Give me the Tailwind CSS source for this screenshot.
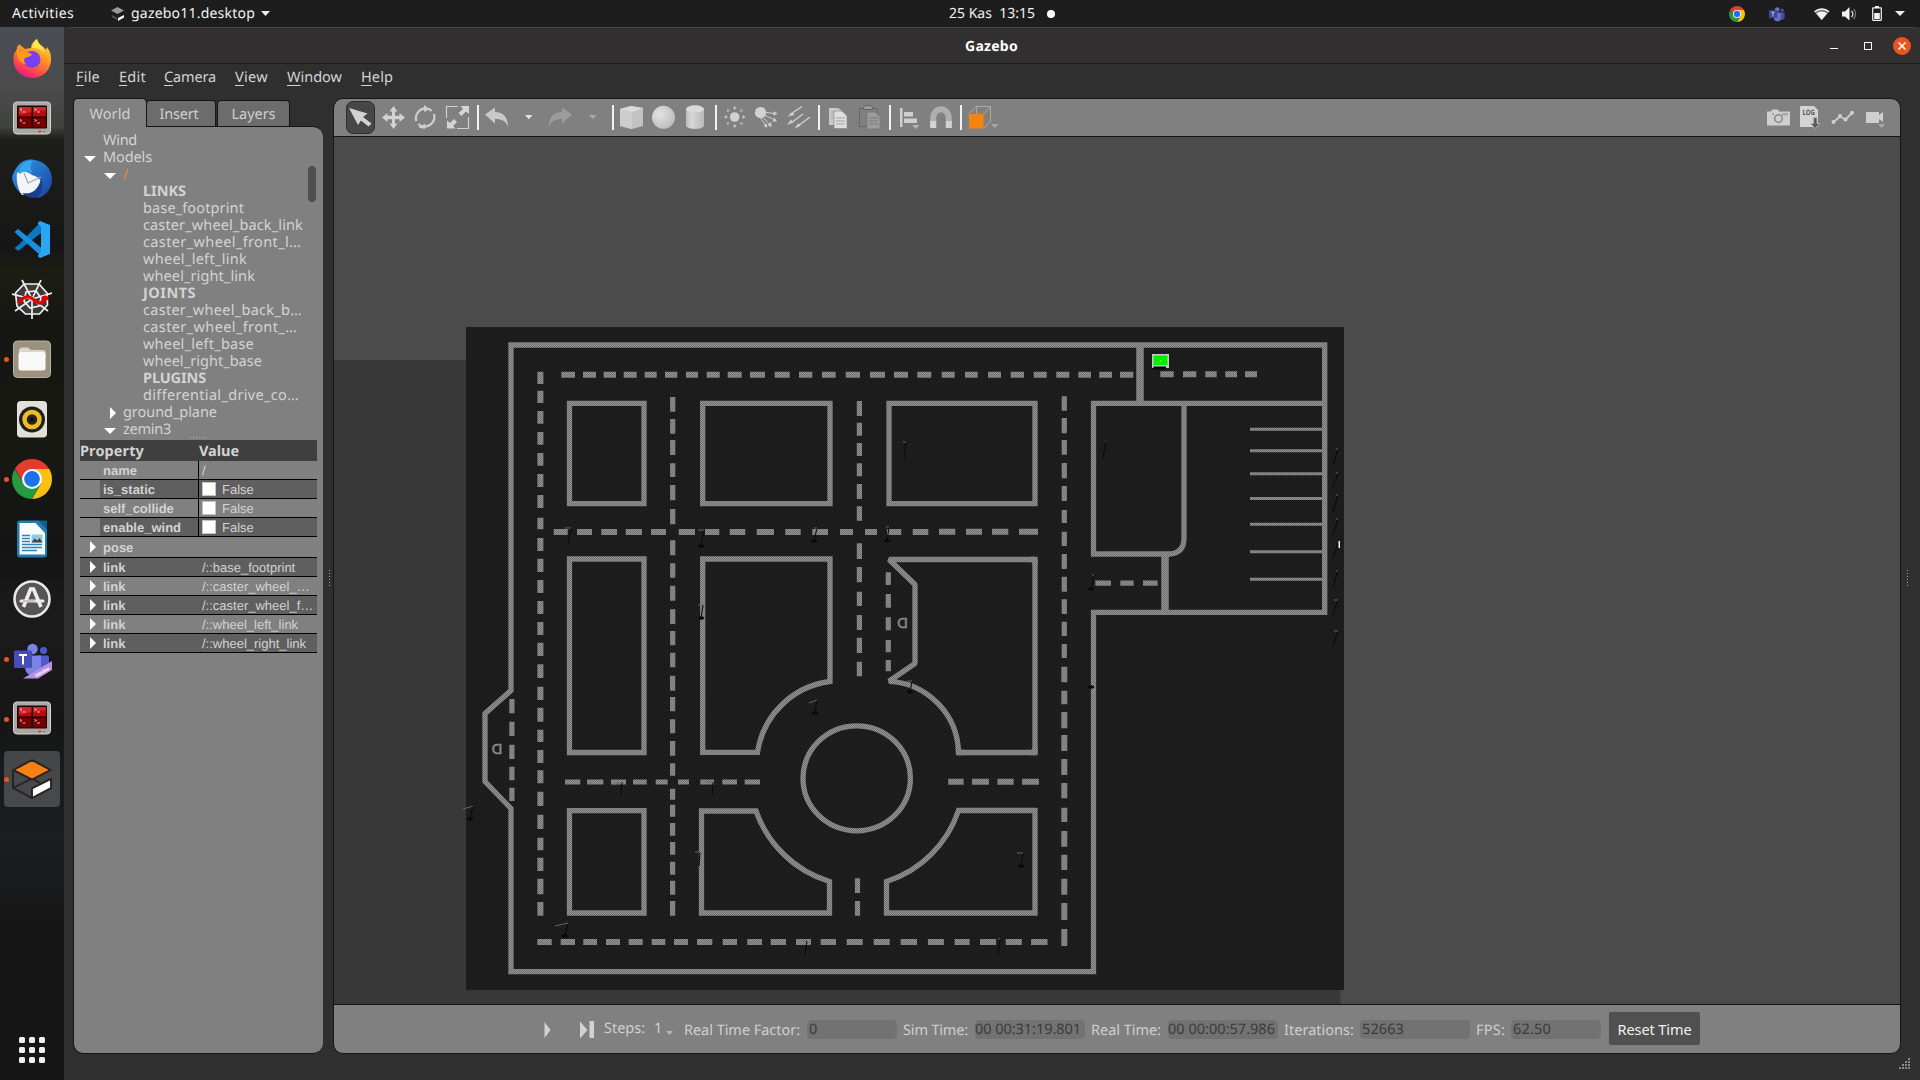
<!DOCTYPE html>
<html lang="en">
<head>
<meta charset="utf-8">
<title>Gazebo</title>
<script src="https://cdn.jsdelivr.net/npm/@tailwindcss/browser@4"></script>
</head>
<body class="w-[1920px] h-[1080px] overflow-hidden bg-[#2f2f2f] flex flex-col font-['Noto_Sans','Open_Sans',sans-serif] text-[14.5px] leading-none text-[#d3d3d3] [text-rendering:geometricPrecision]">

<svg class="absolute w-0 h-0" aria-hidden="true">
  <defs>
    <linearGradient id="tb" x1="0" y1="0" x2="1" y2="1"><stop offset="0" stop-color="#2e9df0"/><stop offset="1" stop-color="#1a3f9c"/></linearGradient>
    <linearGradient id="ff" x1=".8" y1="0" x2=".3" y2="1"><stop offset="0" stop-color="#ffe14a"/><stop offset=".4" stop-color="#ff9a1f"/><stop offset=".75" stop-color="#ff4a4a"/><stop offset="1" stop-color="#e31587"/></linearGradient>
    <radialGradient id="ball" cx=".35" cy=".35" r=".7"><stop offset="0" stop-color="#e2e2e2"/><stop offset="1" stop-color="#bdbdbd"/></radialGradient>
    <linearGradient id="cyl"><stop offset="0" stop-color="#bdbdbd"/><stop offset=".3" stop-color="#d6d6d6"/><stop offset="1" stop-color="#b9b9b9"/></linearGradient>
    <symbol id="chrome" viewBox="0 0 40 40">
      <path d="M3 9.500 11.500 25 20 20V10H37.300A20 20 0 0 0 3 9.500z" fill="#e33b2e"/><path d="M37.300 10A20 20 0 0 1 20 40L28.700 25 20 10z" fill="#fcc011"/><path d="M2.700 10A20 20 0 0 0 20 40L28.700 25 11.500 25z" fill="#249a41"/>
      <circle cx="20" cy="20" r="10" fill="#fff"/><circle cx="20" cy="20" r="7.900" fill="#1a73e8"/>
    </symbol>
    <symbol id="term" viewBox="0 0 40 40">
      <rect x="1.500" y="3" width="37" height="32" rx="3.500" fill="#a9a9a3" stroke="#d6d6d2"/>
      <rect x="5" y="6.500" width="30" height="23" rx="1" fill="#1a0505"/>
      <path d="M6.500 8h13v9.500h-13zM21 8h13v9.500h-13z" fill="#b80a10"/><path d="M6.500 19h13v9.500h-13zM21 19h13v9.500h-13z" fill="#740000"/>
      <path d="M7 8h12.500v5L7 15.500zM21.500 8H34v3l-12.500 2z" fill="#e03a40" opacity=".6"/>
      <path d="M8 9.500l2 1-2 1M10.500 13h3M22.500 9.500l2 1-2 1M25 13h3M8 20.500l2 1-2 1M10.500 24h3M22.500 20.500l2 1-2 1M25 24h3" stroke="#f3c4c4" fill="none" stroke-width=".9"/>
      <path d="M26.500 32.500h2.500" stroke="#e02020" stroke-width="1.500"/><path d="M31 32.500h2" stroke="#777" stroke-width="1"/>
    </symbol>
    <symbol id="teams" viewBox="0 0 40 40">
      <circle cx="20.500" cy="10" r="5.200" fill="#7b83eb"/><circle cx="31.500" cy="11.500" r="3.600" fill="#5059c9"/>
      <path d="M26 16.500h9.500a1.500 1.500 0 0 1 1.500 1.500v9a6 6 0 0 1-10 4.500z" fill="#5059c9"/><path d="M13 16.500h16v12a8 8 0 0 1-16 0z" fill="#7b83eb"/>
      <rect x="2" y="11.500" width="18" height="17.500" rx="1.500" fill="#464eb8"/><path d="M7 16h8M11 16v9.500" stroke="#fff" stroke-width="2" fill="none"/>
    </symbol>
  </defs>
</svg>

<!-- top bar -->
<header class="h-[27px] shrink-0 bg-[#1d1d1d] flex items-center text-[#f2f2f2] text-[14px]">
  <span class="ml-3 w-[99px] whitespace-nowrap" data-w="62">Activities</span>
  <svg class="w-[14px] h-4 mr-[6px]" viewBox="0 0 14 16"><path d="M0 4.500 6.500 1 13 4.500 6.500 8z" fill="#9a9a9a"/><path d="M1 9v2l5 3V12z" fill="#555"/><path d="M7 12l6-3v2.500l-6 3.500z" fill="#fff"/></svg>
  <span class="w-[130px] whitespace-nowrap" data-w="124">gazebo11.desktop</span>
  <svg class="w-[9px] h-[5px]" viewBox="0 0 9 5"><path d="M0 0h9L4.500 5z" fill="#eee"/></svg>
  <span class="ml-[679px] w-[98px] whitespace-pre" data-w="86">25 Kas  13:15</span>
  <i class="w-2 h-2 rounded-full bg-white"></i>
  <div class="ml-auto flex items-center">
    <svg class="w-4 h-4" viewBox="0 0 40 40"><use href="#chrome"/></svg>
    <svg class="w-[18px] h-[18px] ml-[23px]" viewBox="0 0 40 40"><g opacity=".8"><use href="#teams"/></g></svg>
    <svg class="w-4 h-3 ml-[28px]" viewBox="0 0 16 12"><path d="M0 3.500a11.500 11.500 0 0 1 15.500 0L7.700 12z" fill="#777"/><path d="M2.300 5.500a8 8 0 0 1 10.800 0L7.700 12z" fill="#f2f2f2"/><path d="M.6 3.700a11 11 0 0 1 14.400 0" stroke="#f2f2f2" fill="none" stroke-width="1.400"/></svg>
    <svg class="w-[15px] h-[14px] ml-[12px]" viewBox="0 0 15 14"><path d="M0 4.500h3L7.500 0v13.500L3 9.500H0z" fill="#f2f2f2"/><path d="M9.500 4a4 4 0 0 1 0 6" stroke="#ddd" fill="none" stroke-width="1.300"/><path d="M11.500 2a7 7 0 0 1 0 10" stroke="#777" fill="none" stroke-width="1.200"/></svg>
    <svg class="w-[10px] h-[15px] ml-[15px]" viewBox="0 0 10 15"><path d="M3 0h4v2H3z" fill="#f2f2f2"/><rect x=".7" y="1.800" width="8.600" height="12.500" rx=".5" fill="none" stroke="#f2f2f2" stroke-width="1.200"/><path d="M2.200 7h5.600v6H2.200z" fill="#f2f2f2"/></svg>
    <svg class="w-[10px] h-[5px] ml-[13px] mr-[15px]" viewBox="0 0 10 5"><path d="M0 0h10L5 5z" fill="#eee"/></svg>
  </div>
</header>

<div class="flex flex-1 min-h-0">
<!-- dock -->
<nav class="w-16 shrink-0 relative bg-[linear-gradient(#494d54_0px,#4b4b4c_60px,#40423f_100px,#1e1f1b_112px,#161616_220px,#1c1d13_250px,#151513_300px,#181a12_400px,#141414_520px,#1b1b1b_590px,#161616_700px,#1a1f22_810px,#171616_900px,#161515_1053px)] flex flex-col pt-[2px]">
  <div class="h-[60px] flex items-center justify-center"><svg class="w-10 h-10" viewBox="0 0 40 40"><path d="M25 0c-5 3-6 7-6 9l-6 1-6-5c-1 3-3 7-5 10-3 14 6 24 18 24s20-10 19-20c0-5-2-8-4-11l-1 3C32 7 26 6 25 0z" fill="url(#ff)"/><circle cx="20" cy="20.500" r="8.500" fill="#7a3ff0"/><path d="M5 6l3 7c5-2 8 1 12 2-1 3-5 3-7 4-2 2 0 5 1 6-6 0-9-6-9-12z" fill="#ff9a1c"/><path d="M25 0c1 6 7 7 7 14-2-4-7-5-12-5 0-3 2-7 5-9z" fill="#ffe64d"/></svg></div>
  <div class="h-[60px] flex items-center justify-center"><svg class="w-10 h-10" viewBox="0 0 40 40"><use href="#term"/></svg></div>
  <div class="h-[60px] flex items-center justify-center"><svg class="w-10 h-10" viewBox="0 0 40 40"><path d="M5 8C9 2 15 0 20 .500c12 1 20 9 20 20 0 9-6 16-13 18.500L8 34C3 29 1 24 0 19c1-5 3-8 5-11z" fill="url(#tb)"/><path d="M5 14c6-3 11-1 15 2 4 1 7 3 9 6l-3 12-16 2C6 31 4 22 5 14z" fill="#f3f5f8"/><path d="M12 14l4 10 13-6" fill="none" stroke="#9aa6b8" stroke-width="1.200"/><path d="M8 9C12 2 17 1 21 2c-4 3-2 7-1 12-5-2-8-2-12 1-2-1-1-4 0-6z" fill="#3aa4ea"/><path d="M29 20c3 6 1 13-3 18-6 2-12 0-16-4 8 1 15 0 19-14z" fill="#1b3f8e"/></svg></div>
  <div class="h-[60px] flex items-center justify-center"><svg class="w-10 h-10" viewBox="0 0 40 40"><path d="M29 2.500 7.500 25 2.500 29 6 32l23-18z" fill="#0b78c6"/><path d="M2.500 13 6 10l23.500 19v8.500L2.500 13z" fill="#1690df"/><path d="M28 2l10 4v29l-10 4-2.500-2 3.500-4V8l-3.500-4z" fill="#2aa7f2"/></svg></div>
  <div class="h-[60px] flex items-center justify-center"><svg class="w-10 h-10" viewBox="0 0 40 40" fill="none" stroke="#f1f1f1" stroke-width="1.700"><path d="M12 5h15l8 9 .5 12-8 9-14 0L5 27 3.500 14z" fill="#3a3a3a"/><path d="M14 13l10-1 5 7-2 8-9 2-6-7z"/><path d="M20 20 10 1M20 20 29 1M20 20 0 15M20 20l20-6M20 20 3 32M20 20l16 12M20 20v20"/><path d="M6 24c4-5 7-7 11-6s7 6 11 6 3-3 5-5" stroke="#e80000" stroke-width="3.300"/><ellipse cx="33" cy="19" rx="3.500" ry="2.600" fill="#e80000" stroke="none"/></svg></div>
  <div class="h-[60px] flex items-center justify-center relative"><i class="absolute left-1 w-[5px] h-[5px] rounded-full bg-[#e95420]"></i><svg class="w-10 h-10" viewBox="0 0 40 40"><rect x="1.500" y="2" width="37" height="36.500" rx="4" fill="#9a927f" stroke="#b9b3a3"/><path d="M7 13a4 4 0 0 1 3-4.500h6l3 2.500h12a2.500 2.500 0 0 1 2.500 2.500V20H7z" fill="#d9d6cc"/><rect x="6.500" y="13" width="27" height="18.500" rx="2.500" fill="#f8f8f6"/></svg></div>
  <div class="h-[60px] flex items-center justify-center"><svg class="w-10 h-10" viewBox="0 0 40 40"><rect x="5" y="2" width="30" height="36.500" rx="4" fill="#e3e0d7"/><circle cx="20" cy="20.500" r="13" fill="#1f1f22"/><circle cx="20" cy="20.500" r="7.500" fill="none" stroke="#f0bd1f" stroke-width="4.500"/><circle cx="20" cy="20.500" r="4.300" fill="#26262a"/><circle cx="20" cy="20.500" r="2" fill="#050505"/></svg></div>
  <div class="h-[60px] flex items-center justify-center relative"><i class="absolute left-1 w-[5px] h-[5px] rounded-full bg-[#e95420]"></i><svg class="w-10 h-10" viewBox="0 0 40 40"><use href="#chrome"/></svg></div>
  <div class="h-[60px] flex items-center justify-center"><svg class="w-10 h-10" viewBox="0 0 40 40"><path d="M8 1.500h19L35 10v25.500a3 3 0 0 1-3 3H8a3 3 0 0 1-3-3v-31a3 3 0 0 1 3-3z" fill="#1e7db3"/><path d="M7.500 4h16L33 14v21.500H7.500z" fill="#fafafa"/><path d="M26.500 1.500H35V10z" fill="#0c5f8e"/><path d="M10 16.500h8M10 19.500h8M10 22.500h8M10 25.500h20M10 28.500h20M10 31.500h15" stroke="#2e86b8" stroke-width="1.400"/><path d="M19.500 15.500h11v8h-11z" fill="#82cdf0"/><path d="M19.500 23.500l3-4 3 2 2-2.500 3 4.500z" fill="#444"/><circle cx="28.500" cy="17" r="1.200" fill="#f0c020"/></svg></div>
  <div class="h-[60px] flex items-center justify-center"><svg class="w-10 h-10" viewBox="0 0 40 40"><circle cx="20" cy="20" r="17.500" fill="#555" stroke="#e9e9e9" stroke-width="2.600"/><path d="M11.500 28 18.500 10h3L29 28" fill="none" stroke="#eee" stroke-width="3.600"/><path d="M9 22h22" stroke="#eee" stroke-width="3" stroke-linecap="round"/><path d="M11 22h12" stroke="#c8a4c4" stroke-width="1.400"/></svg></div>
  <div class="h-[60px] flex items-center justify-center relative"><i class="absolute left-1 w-[5px] h-[5px] rounded-full bg-[#e95420]"></i><svg class="w-10 h-10" viewBox="0 0 40 40"><use href="#teams"/><path d="M40 22v9L26 39.500H11z" fill="#b78fe0"/><text x="0" y="0" transform="translate(24 38.500) rotate(-30)" font-size="4" font-weight="700" fill="#fff" textLength="16">PREVIEW</text></svg></div>
  <div class="h-[60px] flex items-center justify-center relative"><i class="absolute left-1 w-[5px] h-[5px] rounded-full bg-[#e95420]"></i><svg class="w-10 h-10" viewBox="0 0 40 40"><use href="#term"/></svg></div>
  <div class="h-[60px] flex items-center justify-center relative"><div class="absolute left-1 top-[2px] w-14 h-14 rounded bg-white/20"></div><i class="absolute left-1 w-[5px] h-[5px] rounded-full bg-[#e95420]"></i><svg class="w-10 h-10 relative" viewBox="0 0 40 40" stroke="#262122" stroke-width="1.900" stroke-linejoin="round"><path d="M1 11v18l19 10 19-10V20L20 29.500M1 29l19-9.500 8 4.500M1 11l19 9.500" fill="none"/><path d="M1.500 11 20 1l18.500 10L20 20.500z" fill="#f58113"/><path d="M20 39V29.500L39 20v9z" fill="#fff"/></svg></div>
  <div class="mt-auto mb-[17px] ml-[19px] grid grid-cols-3 w-[26px] gap-x-1 gap-y-1">
    <i class="w-[6px] h-[6px] rounded-[1.500px] bg-[#f0f0ee]"></i><i class="w-[6px] h-[6px] rounded-[1.500px] bg-[#f0f0ee]"></i><i class="w-[6px] h-[6px] rounded-[1.500px] bg-[#f0f0ee]"></i>
    <i class="w-[6px] h-[6px] rounded-[1.500px] bg-[#f0f0ee]"></i><i class="w-[6px] h-[6px] rounded-[1.500px] bg-[#f0f0ee]"></i><i class="w-[6px] h-[6px] rounded-[1.500px] bg-[#f0f0ee]"></i>
    <i class="w-[6px] h-[6px] rounded-[1.500px] bg-[#f0f0ee]"></i><i class="w-[6px] h-[6px] rounded-[1.500px] bg-[#f0f0ee]"></i><i class="w-[6px] h-[6px] rounded-[1.500px] bg-[#f0f0ee]"></i>
  </div>
</nav>

<!-- window -->
<main class="flex-1 min-w-0 flex flex-col relative">
  <div class="h-[37px] shrink-0 bg-[#322f30] border-t border-[#484647] border-b border-b-[#1f1d1e] rounded-t-[7px] flex items-center justify-end relative">
    <span class="absolute left-[901px] top-[12px] font-bold text-white text-[14px]" data-w="53">Gazebo</span>
    <i class="w-2 h-px bg-white mt-[5px] mr-[26px]"></i>
    <i class="w-2 h-2 border border-white mr-[21px]"></i>
    <svg class="w-[18px] h-[18px] mr-[9px]" viewBox="0 0 18 18"><circle cx="9" cy="9" r="9" fill="#e95420"/><path d="M5.500 5.500l7 7M12.500 5.500l-7 7" stroke="#fff" stroke-width="1.500"/></svg>
  </div>
  <div class="h-[34px] shrink-0 flex pt-[6px] pl-[12px] [&>span]:h-[15px] [&>span]:whitespace-nowrap [&_u]:underline-offset-[3px]">
    <span class="w-[43px]" data-w="24"><u>F</u>ile</span><span class="w-[45px]" data-w="27"><u>E</u>dit</span><span class="w-[71px]" data-w="52"><u>C</u>amera</span><span class="w-[52px]" data-w="33"><u>V</u>iew</span><span class="w-[74px]" data-w="55"><u>W</u>indow</span><span data-w="32"><u>H</u>elp</span>
  </div>

  <div class="flex flex-1 min-h-0 pb-[26px] pl-[9px]">
    <!-- left panel -->
    <aside class="w-[250px] shrink-0 flex flex-col relative">
      <div class="flex items-end h-[28px] text-center text-[#cfcfcf] relative z-10">
        <div class="w-[74px] h-[29px] -mb-px bg-[#808080] border border-b-0 border-[#151515] rounded-t-[5px] pt-[8px]"><span data-w="41">World</span></div>
        <div class="w-[70px] -ml-px h-[26px] bg-[#6c6c6c] border border-b-0 border-[#151515] rounded-t-[4px] pt-[6px] pr-1"><span data-w="39">Insert</span></div>
        <div class="w-[73px] h-[26px] ml-px bg-[#6c6c6c] border border-b-0 border-[#151515] rounded-t-[4px] pt-[6px]"><span data-w="44">Layers</span></div>
      </div>
      <div class="flex-1 min-h-0 bg-[#808080] border border-r-0 border-[#151515] rounded-[10px] rounded-tl-none relative flex flex-col">
        <div class="absolute right-[7px] top-[39px] w-2 h-[36px] rounded-full bg-[#4f4f4f]"></div>
        <div id="tree" class="h-[311px] pt-[5px] overflow-hidden relative"></div>
        <i class="h-[3px] w-[18px] mx-auto relative -left-[1px] -top-[2px] -mb-[3px] bg-[radial-gradient(circle,#b5b5b5_1px,transparent_1px)] bg-[length:3px_3px]"></i>
        <div class="ml-[6px] mt-[2px] w-[237px]">
          <div class="h-[21px] pt-[2px] bg-[#3f3f3f] font-bold flex items-center"><span class="w-[119px]" data-w="64">Property</span><span data-w="40">Value</span></div>
          <div id="props" class="font-['Liberation_Sans',Arial,sans-serif] text-[13px]"></div>
        </div>
      </div>
    </aside>
    <div class="w-[10px] shrink-0 flex items-center justify-center"><i class="w-[3px] h-[18px] ml-[2px] mt-[3px] bg-[radial-gradient(circle,#a5a5a5_1px,transparent_1px)] bg-[length:3px_3px]"></i></div>

    <!-- render area -->
    <section class="w-[1568px] shrink-0 border border-[#151515] rounded-[10px] overflow-hidden flex flex-col bg-[#808080]">
      <div class="h-[38px] shrink-0 border-b border-[#151515] flex">
        <svg class="w-[700px] h-[37px]" viewBox="334 99 700 37">
          <rect x="346.500" y="101.500" width="28" height="32" rx="6.500" fill="#474747" stroke="#2d2d2d"/>
          <g fill="#d2d2d2">
            <path d="M349 108l18.500 5.500-4.500 3.500 8.500 6.500-3 3-7.500-6-3 4.500z"/>
            <path d="M393.500 106l4 5.500h-2.500v4.300h4.500V113l5.500 4.500-5.500 4.500v-2.800h-4.500v4.300h2.500l-4 5.500-4-5.500h2.500v-4.300h-4.500v2.800l-5.500-4.500 5.500-4.500v2.800h4.500v-4.300h-2.500z"/>
          </g>
          <g fill="none" stroke="#cdcdcd" stroke-width="2.300"><path d="M416.300 121a9.800 9.800 0 0 1 9-12.500M434 114a9.800 9.800 0 0 1-9 12.500M418.500 124a9.800 9.800 0 0 0 4 3M431.500 111a9.800 9.800 0 0 0-3-2.300"/></g>
          <path d="M424 105l6 4-6 3zM418.500 127.500l6.500-4v5.500z" fill="#cdcdcd"/>
          <g fill="none" stroke="#cfcfcf" stroke-width="1.200"><path d="M458 106.500h-11.500V118M468.500 117v11.500H457"/></g>
          <path d="M469 106v8l-3-2.500-4.500 4.500-3-3L463 109l-2.500-3zM447 128.500v-8l3 2.500 4-4 3 3-4 4 2.500 2.500z" fill="#d5d5d5"/>
          <g fill="#f2f2f2"><path d="M477 105h2v25h-2zM612 105h2v25h-2zM715 105h2v25h-2zM818 105h2v25h-2zM889 105h2v25h-2zM960 105h2v25h-2z"/></g>
          <path d="M485 114.500l10-7v4.500c8 0 13 5 13 15-2-6-6-8-13-8v4.500z" fill="#c9c9c9"/><path d="M525 115h7.500l-3.700 4.200z" fill="#e4e4e4"/>
          <path d="M572 114.500l-10-7v4.500c-8 0-13 5-13 15 2-6 6-8 13-8v4.500z" fill="#9c9c9c"/><path d="M589 115h7.500l-3.700 4.200z" fill="#a8a8a8"/>
          <path d="M620 109l11-3 12 2v18l-11 3-12-3z" fill="#c2c2c2"/><path d="M620 109l12 3v17l-12-3z" fill="#cdcdcd"/><path d="M620 109l11-3 12 2-11 4z" fill="#dadada"/>
          <circle cx="663.500" cy="117.300" r="11.500" fill="url(#ball)"/>
          <path d="M686 109v16.500c0 4.500 18 4.500 18 0V109z" fill="url(#cyl)"/><ellipse cx="695" cy="109" rx="9" ry="3.700" fill="#dadada"/>
          <circle cx="734.700" cy="117" r="4.800" fill="#d2d2d2"/>
          <g stroke="#c6c6c6" stroke-width="1" fill="#c6c6c6">
            <path d="M734.700 110v-2M734.700 124v2M727.500 117h-2M742 117h2M729.500 112l-1.500-1.500M739.800 112l1.500-1.500M729.500 122l-1.500 1.500M739.800 122l1.500 1.500"/>
            <path d="M732.700 108.500l2-2.500 2 2.500zM732.700 125.500l2 2.500 2-2.500zM726.500 115l-2.500 2 2.500 2zM743 115l2.500 2-2.500 2zM727 112v-2.500h2.500zM742.500 112v-2.500H740zM727 122v2.500h2.500zM742.500 122v2.500H740z" stroke="none"/>
          </g>
          <circle cx="760.500" cy="112.500" r="5.600" fill="#d2d2d2"/>
          <g stroke="#cfcfcf" stroke-width="1"><path d="M766 112.500l9 1M765 115.500l9 4M763 117.500l7 7M760.500 118l5 7"/></g><path d="M773.500 111.200l4 2.300-4 2.300zM774.500 117.500l2.500 4h-4.500zM771 122l.7 5-4.300-1.800zM767 123.500v4.300l-3.600-2z" fill="#cfcfcf"/>
          <g stroke="#cdcdcd" stroke-width="1.500"><path d="M802 106.500l-12 8M803 114l-12 9M810 117l-12 9"/></g><path d="M792.500 112l2 3-7 1.500zM791 119.500l2 3-6 2.500zM798.500 123l2 3-6 2.500z" fill="#cdcdcd"/>
          <path d="M829 108h9l4 3v14h-13z" fill="#c9c9c9"/><path d="M834 111h8l5 5v12.500h-13z" fill="#dedede" stroke="#8b8b8b" stroke-width=".7"/><path d="M836 118h9M836 121h9M836 124h9M831 112h3M831 115h2M831 118h2" stroke="#a3a3a3"/>
          <path d="M859.500 108.500h17M859.500 108.500v18h8M877 108.500v4" stroke="#666" fill="none"/><path d="M863.500 107.500l2-2h5l2 2v2h-9z" fill="#9b9b9b" stroke="#626262"/><path d="M867 112h8l5 5v12h-13z" fill="#9c9c9c" stroke="#777" stroke-width=".7"/><path d="M869 118h9M869 121h9M869 124h9" stroke="#7b7b7b"/>
          <path d="M900 108h2.500v19H900zM904 112h9v4.500h-9zM904 118.500h13v4.500h-13z" fill="#cfcfcf"/><path d="M912 125h7.500l-3.700 4z" fill="#b5b5b5"/>
          <path d="M933.200 128v-10a7.500 8.500 0 0 1 15.600 0v10" fill="none" stroke="#aeaeae" stroke-width="6"/><path d="M930.200 121h6v7h-6zM945.800 121h6v7h-6z" fill="#d2d2d2"/>
          <path d="M968.500 114l8-7.500h14v15l-7 7M983.500 114l7-7.500M976.500 106.500v8" fill="none" stroke="#a9a9a9"/><path d="M969 114h14.500v14.500H969z" fill="#f78210"/><path d="M991 124h7.500l-3.700 4z" fill="#a8a8a8"/>
        </svg>
        <svg class="w-[140px] h-[37px] ml-auto" viewBox="1760 99 140 37">
          <path d="M1767 111.500h4l1-2h6l1 2h11v14h-23z" fill="#cfcfcf"/><circle cx="1778.500" cy="118.500" r="3.800" fill="#cfcfcf" stroke="#8c8c8c" stroke-width="1.600"/><path d="M1782.500 113.500h5v1.500h-5zM1772.500 113.500h1v1h-1z" stroke="#909090" fill="none" stroke-width=".8"/>
          <path d="M1800 106h14l4 4v17h-18z" fill="#d3d3d3"/><text x="1802.500" y="115" font-size="7.500" font-weight="700" fill="#555" textLength="12.500" lengthAdjust="spacingAndGlyphs">LOG</text><path d="M1813.500 117.500h3.500v6h3l-4.800 5-4.800-5h3z" fill="#5a5a5a" stroke="#bdbdbd" stroke-width=".8"/>
          <path d="M1833.500 122l6.500-5.500 5.500 3 6.500-6.500" stroke="#cfcfcf" stroke-width="1.800" fill="none"/><g fill="#cfcfcf"><circle cx="1833.500" cy="122" r="2"/><circle cx="1840" cy="116" r="2"/><circle cx="1845.500" cy="119.500" r="2"/><circle cx="1852" cy="112.700" r="2"/></g>
          <path d="M1866 112h13v3l4-3v10l-4-3v4h-13z" fill="#cfcfcf"/><path d="M1878 124h7l-3.500 4z" fill="#a8a8a8"/>
        </svg>
      </div>

      <svg class="w-[1566px] h-[867px] shrink-0 bg-[#4b4b4b]" viewBox="334 137 1566 867">
        <defs>
          <pattern id="gr" width="4" height="4" patternUnits="userSpaceOnUse"><rect width="4" height="4" fill="#1c1d1c"/><path d="M0 0h1v1H0zM2 2h1v1H2z" fill="#131513"/><path d="M2 0h1v1H2zM0 2h1v1H0z" fill="#212221"/></pattern>
          <pattern id="ln" width="2" height="2" patternUnits="userSpaceOnUse"><rect width="2" height="2" fill="#949494"/><path d="M0 0h1v1H0zM1 1h1v1H1z" fill="#707070"/></pattern>
        </defs>
        <rect x="334" y="360" width="1006.500" height="650" fill="#383838"/>
        <rect x="466" y="327" width="878" height="663" fill="url(#gr)"/>
        <g fill="none" stroke="url(#ln)" stroke-width="5.300">
          <path d="M511 690.500V345H1324.700V612.300H1093.500V971.700H511V808.500L485 781.500V713.500L511 690.500z"/>
          <path d="M1324.700 403.300H1093.500V554H1170Q1184 553 1184 538V403.300"/>
          <path d="M1140 345V403.300M1165 554V612.300" stroke-width="7.500"/>
          <path d="M1250 429.300h73M1250 450.800h73M1250 473.700h73M1250 498.500h73M1250 524.300h73M1250 551.800h73M1250 579.300h73" stroke-width="3"/>
          <path d="M569.500 403.300H644V503.700H569.500zM702.700 403.300H830V503.700H702.700zM889 403.300H1035V503.700H889zM569.500 559H644V752.500H569.500zM569.500 810.700H644V913H569.500z"/>
          <path d="M702.700 559H830V681.500A84 84 0 0 0 757.500 752.300H702.700z"/>
          <path d="M889 559.500H1035V752.500H958.500A73 73 0 0 0 889 681.300L915 663.500V584.500z" stroke-linejoin="bevel"/>
          <path d="M1030 559.500H1035V565M1035 747V752.500H1030M965 752.500H958.500V748"/>
          <path d="M701.500 811H756A113 113 0 0 0 829.500 881.500V913H701.500z"/>
          <path d="M958.500 810.500H1035V913H886.500V881.500A112 112 0 0 0 958.500 810.500z"/>
          <ellipse cx="856.700" cy="778.300" rx="53.700" ry="52.500"/>
        </g>
        <path id="dash6" fill="none" stroke="url(#ln)" stroke-width="6"/>
        <path id="dash5" fill="none" stroke="url(#ln)" stroke-width="5.200"/>
        <g fill="#858585" stroke="#858585" stroke-width=".7" font-size="14.500" font-family="Liberation Sans, sans-serif"><text transform="translate(907.700 628) scale(-1 1)">D</text><text transform="translate(502.200 754) scale(-1 1)">D</text></g>
        <g id="lamps"></g>
        <path d="M1152 354h17v14h-17z" fill="#c9c9c9"/><path d="M1153.500 366.500h12.500v3h-13z" fill="#080808"/><path d="M1153.500 355.500h14v9.500h-14z" fill="#00f000"/><path d="M1160 360h1.500v1.500h-1.500z" fill="#d8e000"/><path d="M1338.500 541h1.500v7h-1.500z" fill="#eee"/>
      </svg>

      <div class="flex-1 border-t border-[#151515] flex items-center relative text-[#cfcfcf] [&_span]:whitespace-nowrap">
        <svg class="w-[54px] h-[17px] ml-[208px]" viewBox="542 1020 54 17"><path d="M544.500 1021l6 8-6 8zM580 1020.500l7.500 8.500-7.500 8.500zM589.500 1020h4.500v17h-4.500z" fill="#d2d2d2"/></svg>
        <span class="ml-2 w-[50px] -mt-[1px]" data-w="41">Steps:</span><span class="w-[12px] -mt-[1px]">1</span>
        <svg class="w-[7px] h-1 mt-2" viewBox="0 0 7 4"><path d="M0 0h7L3.500 4z" fill="#b5b5b5"/></svg>
        <span class="ml-[11px] mt-[2px] w-[123px]" data-w="116">Real Time Factor:</span>
        <div class="w-[90px] h-[19px] rounded bg-[#727272] text-[#3a3a3a] pl-[2px] pt-[2px]">0</div>
        <span class="ml-[6px] mt-[2px] w-[72px]" data-w="65">Sim Time:</span>
        <div class="w-[110px] h-[19px] rounded bg-[#727272] text-[#3a3a3a] pt-[2px]"><span data-w="106">00 00:31:19.801</span></div>
        <span class="ml-[6px] mt-[2px] w-[77px]" data-w="70">Real Time:</span>
        <div class="w-[110px] h-[19px] rounded bg-[#727272] text-[#3a3a3a] pt-[2px]"><span data-w="107">00 00:00:57.986</span></div>
        <span class="ml-[6px] mt-[2px] w-[76px]" data-w="70">Iterations:</span>
        <div class="w-[110px] h-[19px] rounded bg-[#727272] text-[#3a3a3a] pl-[2px] pt-[2px]"><span data-w="42">52663</span></div>
        <span class="ml-[6px] mt-[2px] w-[35px]" data-w="29">FPS:</span>
        <div class="w-[90px] h-[19px] rounded bg-[#727272] text-[#3a3a3a] pl-[2px] pt-[2px]"><span data-w="38">62.50</span></div>
        <button class="ml-2 w-[91px] h-[33px] -mt-[1px] pt-[1px] rounded-[2px] bg-[#505050] text-[#f0f0f0] leading-none"><span data-w="74">Reset Time</span></button>
      </div>
    </section>
    <i class="w-[3px] h-[18px] ml-[5px] self-center mt-[3px] bg-[radial-gradient(circle,#a5a5a5_1px,transparent_1px)] bg-[length:3px_3px]"></i>
  </div>
  <svg class="absolute right-[9px] bottom-[10px] w-[12px] h-[12px]" viewBox="0 0 12 12"><path d="M9 0h2v2H9zM6 3h2v2H6zM9 3h2v2H9zM3 6h2v2H3zM6 6h2v2H6zM9 6h2v2H9zM0 9h2v2H0zM3 9h2v2H3zM6 9h2v2H6zM9 9h2v2H9z" fill="#8a8a8a"/></svg>
</main>
</div>

<script>
// model tree: [indent, label, width, kind, arrow]
const tree = [[29,'Wind',34],[29,'Models',49,'','d'],[49,'/',6,'o','d'],[69,'LINKS',43,'b'],[69,'base_footprint',101],[69,'caster_wheel_back_link',160],[69,'caster_wheel_front_l…',158],[69,'wheel_left_link',104],[69,'wheel_right_link',112],[69,'JOINTS',53,'b'],[69,'caster_wheel_back_b…',159],[69,'caster_wheel_front_…',154],[69,'wheel_left_base',111],[69,'wheel_right_base',119],[69,'PLUGINS',63,'b'],[69,'differential_drive_co…',156],[49,'ground_plane',94,'','r'],[49,'zemin3',48,'','d']];
const arrow = {d:'<svg class="w-3 h-[6px] mt-[2px] ml-px mr-[7px]" viewBox="0 0 12 6"><path d="M0 0h12L6 6z" fill="#fff"/></svg>', r:'<svg class="w-[6px] h-3 ml-[7px] mr-[7px]" viewBox="0 0 6 12"><path d="M0 0v12l6-6z" fill="#fff"/></svg>'};
document.getElementById('tree').innerHTML = tree.map(([x,t,w,k,a]) =>
  `<div class="h-[17px] flex items-center whitespace-nowrap ${k==='b'?'font-bold':''} ${k==='o'?'text-[#e8883c]':''}" style="padding-left:${a?x-20:x}px">${a?arrow[a]:''}<span class="h-[16px]" data-w="${w}">${t}</span></div>`).join('');
// property rows: [name, value, height, kind]
const props = [['name','/',19,'n'],['is_static','False',19,'c'],['self_collide','False',19,'c'],['enable_wind','False',19,'c'],['pose','',21,'g'],['link','/::base_footprint',19,'g'],['link','/::caster_wheel_…',19,'g'],['link','/::caster_wheel_f…',19,'g'],['link','/::wheel_left_link',19,'g'],['link','/::wheel_right_link',19,'g']];
document.getElementById('props').innerHTML = props.map(([n,v,h,k],i) => {
  const dark = i%2, g = k==='g';
  return `<div class="flex border-b border-black ${dark&&g?'bg-[#5f5f5f]':''}" style="height:${h}px">
    <div class="w-5 flex items-center pl-[10px]">${g?'<svg class="w-[6px] h-3" viewBox="0 0 6 12"><path d="M0 0v12l6-6z" fill="#fff"/></svg>':''}</div>
    <div class="w-[99px] flex items-center pl-[3px] font-bold ${g?'':'border-r border-black'} ${dark&&!g?'bg-[#5f5f5f]':''}">${n}</div>
    <div class="flex-1 flex items-center pl-[3px] whitespace-nowrap ${dark&&!g?'bg-[#5f5f5f]':''}">${k==='c'?'<i class="w-[14px] h-[14px] bg-white border border-[#c4c4c4] mr-[6px]"></i>':''}${v}</div></div>`;
}).join('');

// lane dashes: [horizontal?, cross position, origin, units per pixel, start/end list]
const lanes6 = [
 [1,374.7,460,3,[304,345,369,408,431,468,491,530,554,590,615,652,678,714,740,779,803,845,870,915,944,989,1017,1057,1086,1127,1157,1200,1230,1275,1302,1344,1372,1414]],
 [1,374.7,860,3,[245,284,315,353,384,423,452,492,521,560,589,628,655,693,718,756,780,820]],
 [1,374.2,860,3,[901,941,969,1009,1036,1070,1096,1131,1155,1191]],
 [1,532,460,3,[281,323,351,396,424,471,497,546,573,618,656,705,735,778,809,856,890,942,976,1022,1057,1104,1140,1179,1215,1251,1281,1324,1358,1405]],
 [1,531.7,860,3,[237,286,318,366,396,445,477,534]],
 [1,942,460,3,[232,275,302,345,370,411,438,480,506,548,575,616,642,684,711,757,788,831,862,906,932,978,1008,1053,1082,1128,1160,1208,1241,1289,1322,1371]],
 [1,942,800,2.8,[358,403,433,475,504,549,576,621,647,693]],
 [1,781.7,800,2.8,[415,458,482,529,553,598,622,669]],
 [0,540.4,320,3,[155,192,212,249,273,311,336,374,399,437,462,501,525,564,593,628,654,693,716,756,780,819,843,882,906,945,968,1008]],
 [0,540.4,650,3,[43,84,110,150,173,215,239,276,300,339,361,400,425,468,494,537,563,601,623,663,686,733,756,797]],
 [0,1064.300,650,3,[50,97,122,163,186,235,255,303,327,375,399,445,473,516,543,590,614,660,686,734,759,810,837,888]]];
const lanes5 = [
 [1,782,460,3,[315,361,381,430,453,498,519,560,587,623,654,687,721,762,787,831,854,900]],
 [1,583.2,860,3,[706,753,781,821,849,893]],
 [0,672.7,320,3,[231,275,297,341,360,405,430,471,495,541,567,613,661,706,730,773,797,842,868,912,933,976,998,1042]],
 [0,672.6,650,3,[77,122,141,184,208,250,273,317,340,377,416,449,464,500,519,557,576,614,635,674,692,734,753,797]],
 [0,859.4,320,3,[243,288,308,347,369,408,430,469,492,537,559,602,670,717,741,787,815,858,885,930,953,999,1025,1069]],
 [0,888.3,320,3,[757,795,822,863,892,931,960,997,1020,1054]],
 [0,1064.300,320,3,[229,272,294,340,360,404,429,475,498,543,570,609,635,678,702,747,770,815,838,882,905,948,972,1014]],
 [0,511.900,650,3,[147,190,215,258,284,327,350,391,413,453]],
 [0,857.500,650,3,[685,729,753,797]]];
const toPath = L => L.map(([h,c,o,k,p]) => { let d=''; for (let i=0;i<p.length;i+=2){const a=(o+p[i]/k).toFixed(1),b=(o+p[i+1]/k).toFixed(1); d+= h?`M${a} ${c}H${b}`:`M${c} ${a}V${b}`;} return d; }).join('');
document.getElementById('dash6').setAttribute('d', toPath(lanes6));
document.getElementById('dash5').setAttribute('d', toPath(lanes5));

// street lamps: [head x, head y, foot x, foot y, arm length, base?]
const lamps = [[704,530,701,546,6,1],[817,528,814,541,3,1],[889,527,887,541,3,1],[703,605,701,618,5,1],[571,528,568,545,6,0],[906,442,904,459,3,0],[1106,441,1103,458,1,0],[1094,575,1091,589,2,1],[817,700,815,713,8,1],[912,681,910,692,5,1],[473,806,470,819,10,1],[568,923,565,936,13,1],[622,782,621,795,9,0],[713,782,712,796,7,0],[807,941,805,955,4,0],[1000,939,998,955,2,0],[1023,853,1021,866,6,1],[700,852,699,866,5,0],[1091,687,1091,687,0,1],[1338,449,1333,464,2,0],[1338,473,1333,487,2,0],[1338,495,1333,512,2,0],[1338,519,1333,535,2,0],[1338,544,1333,558,0,0],[1338,571,1333,586,2,0],[1338,600,1333,615,4,0],[1338,631,1333,646,4,0]];
document.getElementById('lamps').innerHTML = lamps.map(([x,y,u,v,l,b]) => `<path d="M${x} ${y}L${u} ${v}" stroke="#0a0b0a" stroke-width="1.100"/><path d="M${x} ${y}l-${l} ${l>7?3:0}" stroke="#666" stroke-width="1"/>`+(b?`<ellipse cx="${u}" cy="${v}" rx="3.200" ry="1.700" fill="#090a09"/>`:'')).join('');

// fit each label to its measured width, again once styles and fonts have settled
function fitLabels() {
  document.querySelectorAll('[data-w]').forEach(e => {
    e.style.letterSpacing = '0px';
    const r = document.createRange(); r.selectNodeContents(e);
    e.style.letterSpacing = ((+e.dataset.w - r.getBoundingClientRect().width) / e.textContent.length).toFixed(3) + 'px';
  });
}
fitLabels();
window.addEventListener('load', fitLabels);
document.fonts.ready.then(fitLabels);
setTimeout(fitLabels, 60);
</script>
</body>
</html>
